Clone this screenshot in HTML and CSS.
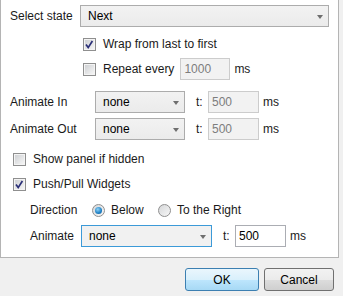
FILE: index.html
```html
<!DOCTYPE html>
<html lang="en">
<head>
    <meta charset="UTF-8">
    <title>State Options</title>
    <link rel="stylesheet" href="styles.css">
</head>
<body>

    <!-- Options panel -->
    <div class="panel">
        <div class="row row-first">
            <span class="label label-state">Select state</span>
            <div class="select select-state">
                <span>Next</span>
                <i class="arrow"></i>
            </div>
        </div>

        <div class="row row-wrap">
            <span class="check is-checked">
                <svg width="13" height="13" viewBox="0 0 13 13"><path d="M3 6.5 L5.2 9.6 L9.4 3" fill="none" stroke="#2b2f78" stroke-width="1.7"/></svg>
            </span>
            <span>Wrap from last to first</span>
        </div>

        <div class="row row-repeat">
            <span class="check"></span>
            <span>Repeat every</span>
            <div class="field field-repeat is-disabled">1000</div>
            <span class="unit">ms</span>
        </div>

        <div class="row row-anim-in">
            <span class="label label-anim">Animate In</span>
            <div class="select select-small">
                <span>none</span>
                <i class="arrow"></i>
            </div>
            <span class="t-label">t:</span>
            <div class="field field-small is-disabled">500</div>
            <span class="unit">ms</span>
        </div>

        <div class="row row-anim-out">
            <span class="label label-anim">Animate Out</span>
            <div class="select select-small">
                <span>none</span>
                <i class="arrow"></i>
            </div>
            <span class="t-label">t:</span>
            <div class="field field-small is-disabled">500</div>
            <span class="unit">ms</span>
        </div>

        <div class="row row-show">
            <span class="check"></span>
            <span>Show panel if hidden</span>
        </div>

        <div class="row row-push">
            <span class="check is-checked">
                <svg width="13" height="13" viewBox="0 0 13 13"><path d="M3 6.5 L5.2 9.6 L9.4 3" fill="none" stroke="#2b2f78" stroke-width="1.7"/></svg>
            </span>
            <span>Push/Pull Widgets</span>
        </div>

        <div class="row row-direction">
            <span class="label label-direction">Direction</span>
            <span class="radio is-selected"></span>
            <span class="radio-text">Below</span>
            <span class="radio"></span>
            <span>To the Right</span>
        </div>

        <div class="row row-animate">
            <span class="label label-animate">Animate</span>
            <div class="select select-focus">
                <span>none</span>
                <i class="arrow"></i>
            </div>
            <span class="t-label">t:</span>
            <div class="field field-small">500</div>
            <span class="unit">ms</span>
        </div>
    </div>

    <!-- Dialog buttons -->
    <div class="buttons">
        <button class="btn btn-default">OK</button>
        <button class="btn">Cancel</button>
    </div>

</body>
</html>
```

FILE: styles.css
```css
/* Base styles */
body {
    margin: 0;
    background: #f0f0f0;
    font-family: "Liberation Sans", Arial, sans-serif;
    font-size: 12px;
    color: #1a1a1a;
}

/* Panel */
.panel {
    box-sizing: border-box;
    width: 339px;
    background: #ffffff;
    border: 1px solid #b4b4b4;
    border-top: none;
    padding: 5px 0 10px 0;
}

.row {
    display: flex;
    align-items: center;
    height: 22px;
    white-space: nowrap;
}

.row-first { padding-left: 9px; }
.row-wrap { margin-top: 6px; padding-left: 82px; }
.row-repeat { margin-top: 3px; padding-left: 82px; }
.row-anim-in { margin-top: 11px; padding-left: 9px; }
.row-anim-out { margin-top: 5px; padding-left: 9px; }
.row-show { margin-top: 8px; padding-left: 12px; }
.row-push { margin-top: 3px; padding-left: 12px; }
.row-direction { margin-top: 4px; padding-left: 29px; }
.row-animate { margin-top: 4px; padding-left: 29px; }

/* Labels */
.label-state { width: 70px; }
.label-anim { width: 85px; }
.label-direction { width: 62px; }
.label-animate { width: 51px; }

.t-label {
    width: 12px;
    margin-left: 11px;
}

.unit {
    margin-left: 4px;
}

/* Dropdowns */
.select {
    box-sizing: border-box;
    position: relative;
    height: 22px;
    display: flex;
    align-items: center;
    padding-left: 7px;
    border: 1px solid #acacac;
    background: linear-gradient(#f2f2f2, #ebebeb);
    color: #000;
}

.select-state { width: 249px; }
.select-small { width: 90px; }

.select-focus {
    width: 131px;
    border-color: #3c9ad8;
    background: #f1f1f1;
}

.arrow {
    position: absolute;
    right: 5px;
    top: 9px;
    width: 0;
    height: 0;
    border-left: 3.5px solid transparent;
    border-right: 3.5px solid transparent;
    border-top: 4px solid #6e6e6e;
}

/* Text fields */
.field {
    box-sizing: border-box;
    height: 22px;
    display: flex;
    align-items: center;
    padding-left: 3px;
    border: 1px solid #abadb3;
    background: #ffffff;
    color: #000;
}

.field.is-disabled {
    border-color: #cccccc;
    background: #f2f2f2;
    color: #7d7d7d;
}

.field-repeat {
    width: 50px;
    margin-left: 6px;
}

.field-small { width: 51px; }

/* Checkboxes */
.check {
    box-sizing: border-box;
    position: relative;
    width: 13px;
    height: 13px;
    margin-right: 7px;
    border: 1px solid #8f8f8f;
    background: #f4f4f4;
}

.check::before {
    content: "";
    position: absolute;
    left: 1px;
    top: 1px;
    right: 1px;
    bottom: 1px;
    background: linear-gradient(135deg, #cfd1d4, #f5f5f5);
}

.check svg {
    position: absolute;
    left: -1px;
    top: -1px;
}

/* Radio buttons */
.radio {
    box-sizing: border-box;
    position: relative;
    width: 13px;
    height: 13px;
    margin-right: 6px;
    border: 1px solid #8f8f8f;
    border-radius: 50%;
    background: linear-gradient(135deg, #d6d7d9, #f7f7f7);
}

.radio.is-selected::after {
    content: "";
    position: absolute;
    left: 2px;
    top: 2px;
    width: 7px;
    height: 7px;
    border-radius: 50%;
    background: radial-gradient(circle at 40% 35%, #8fd3f7, #1d7fc4 60%, #0d5a95);
}

.radio-text {
    width: 47px;
}

/* Dialog buttons */
.buttons {
    display: flex;
    justify-content: flex-end;
    gap: 5px;
    padding: 10px 9px 0 0;
}

.btn {
    box-sizing: border-box;
    width: 70px;
    height: 23px;
    padding: 0;
    font-family: "Liberation Sans", Arial, sans-serif;
    font-size: 12px;
    color: #000;
    border: 1px solid #707070;
    border-radius: 3px;
    background: linear-gradient(#f2f2f2 0%, #ebebeb 50%, #dddddd 51%, #cfcfcf 100%);
}

.btn-default {
    width: 74px;
    border-color: #3c7fb1;
    background: linear-gradient(#eaf6fd 0%, #d9f0fc 50%, #bee6fd 51%, #a7d9f5 100%);
}
```
